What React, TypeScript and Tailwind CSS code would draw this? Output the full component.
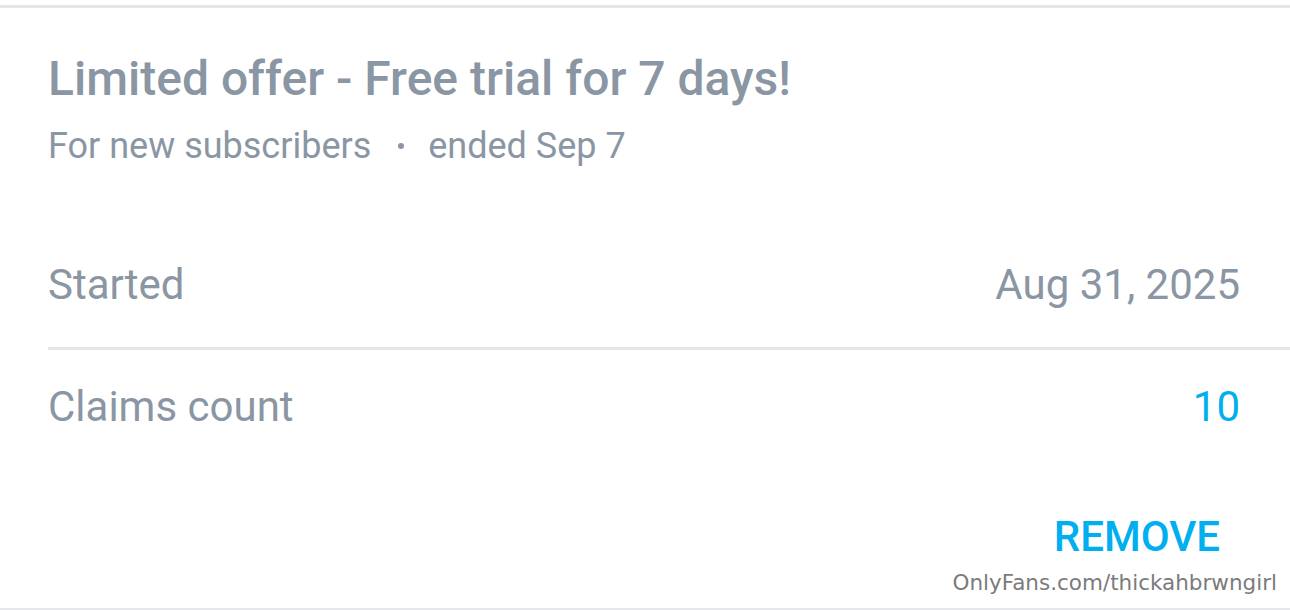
export default function App() {
  return (
    <div
      className="w-[1290px] h-[610px] bg-white overflow-hidden flex flex-col"
      style={{ fontFamily: "Roboto, 'Liberation Sans', sans-serif" }}
    >
      <div className="mt-[5px] h-[3px] bg-[#e4e6ea]" />
      <div className="pl-12 pt-[43px]">
        <h1 className="text-[48px] leading-[56px] font-medium text-[#8a96a3]">
          Limited offer - Free trial for 7 days!
        </h1>
        <p className="mt-[19px] text-[36px] leading-[40px] text-[#8a96a3] flex items-center">
          <span>For new subscribers</span>
          <span className="ml-[27px] mr-[24px] w-[6px] h-[6px] rounded-full bg-[#8a96a3]" />
          <span>ended Sep 7</span>
        </p>
      </div>
      <div className="pl-12 mt-[94px]">
        <div className="flex justify-between pr-[50px] pb-[37px] border-b-[3px] border-[#e4e6ea] text-[42px] leading-[50px]">
          <span className="text-[#8a96a3]">Started</span>
          <span className="text-[#8a96a3]">Aug 31, 2025</span>
        </div>
        <div className="flex justify-between pr-[50px] mt-[32px] text-[42px] leading-[50px]">
          <span className="text-[#8a96a3]">Claims count</span>
          <span className="text-[#00aff0]">10</span>
        </div>
      </div>
      <div className="flex justify-end pr-[70px] mt-[80px]">
        <button className="text-[42px] font-medium text-[#00aff0] leading-[50px]">REMOVE</button>
      </div>
      <div className="flex justify-end pr-[13px] mt-[8px]">
        <span
          className="text-[21.5px] leading-[26px] text-[#7b7b7b]"
          style={{ fontFamily: "'DejaVu Sans', sans-serif" }}
        >
          OnlyFans.com/thickahbrwngirl
        </span>
      </div>
      <div className="mt-auto h-[2px] bg-[#e4e6ea]" />
    </div>
  );
}
